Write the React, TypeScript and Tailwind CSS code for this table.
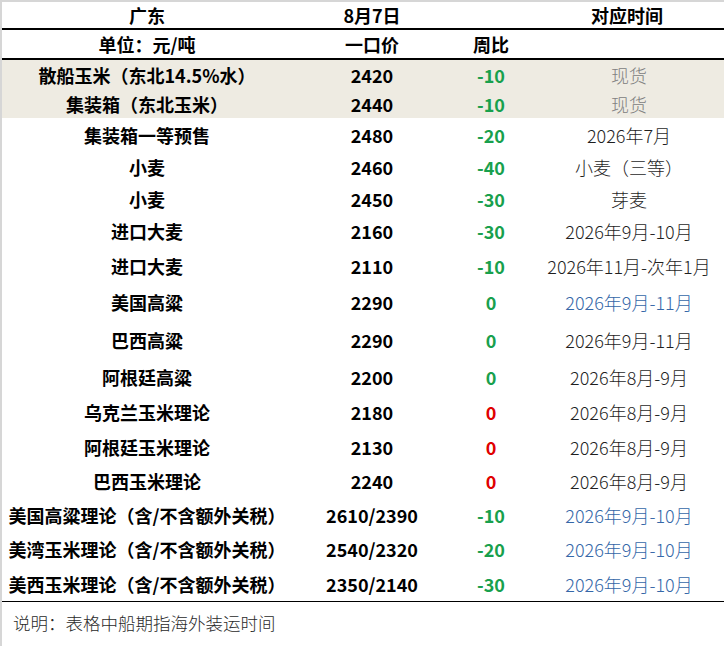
import React from "react";

type Row = {
  name: string;
  price: string;
  chg: string;
  chgColor: "g" | "r";
  time: string;
  timeBlue?: boolean;
  h: string;
  hl?: boolean;
};

const rows: Row[] = [
  { name: "散船玉米（东北14.5%水）", price: "2420", chg: "-10", chgColor: "g", time: "现货", h: "h-[29px]", hl: true },
  { name: "集装箱（东北玉米）", price: "2440", chg: "-10", chgColor: "g", time: "现货", h: "h-[29px]", hl: true },
  { name: "集装箱一等预售", price: "2480", chg: "-20", chgColor: "g", time: "2026年7月", h: "h-[33px]" },
  { name: "小麦", price: "2460", chg: "-40", chgColor: "g", time: "小麦（三等）", h: "h-[32px]" },
  { name: "小麦", price: "2450", chg: "-30", chgColor: "g", time: "芽麦", h: "h-[31px]" },
  { name: "进口大麦", price: "2160", chg: "-30", chgColor: "g", time: "2026年9月-10月", h: "h-[33px]" },
  { name: "进口大麦", price: "2110", chg: "-10", chgColor: "g", time: "2026年11月-次年1月", h: "h-[37px]" },
  { name: "美国高粱", price: "2290", chg: "0", chgColor: "g", time: "2026年9月-11月", timeBlue: true, h: "h-[36px]" },
  { name: "巴西高粱", price: "2290", chg: "0", chgColor: "g", time: "2026年9月-11月", h: "h-[40px]" },
  { name: "阿根廷高粱", price: "2200", chg: "0", chgColor: "g", time: "2026年8月-9月", h: "h-[34px]" },
  { name: "乌克兰玉米理论", price: "2180", chg: "0", chgColor: "r", time: "2026年8月-9月", h: "h-[36px]" },
  { name: "阿根廷玉米理论", price: "2130", chg: "0", chgColor: "r", time: "2026年8月-9月", h: "h-[34px]" },
  { name: "巴西玉米理论", price: "2240", chg: "0", chgColor: "r", time: "2026年8月-9月", h: "h-[34px]" },
  { name: "美国高粱理论（含/不含额外关税）", price: "2610/2390", chg: "-10", chgColor: "g", time: "2026年9月-10月", timeBlue: true, h: "h-[33px]" },
  { name: "美湾玉米理论（含/不含额外关税）", price: "2540/2320", chg: "-20", chgColor: "g", time: "2026年9月-10月", timeBlue: true, h: "h-[36px]" },
  { name: "美西玉米理论（含/不含额外关税）", price: "2350/2140", chg: "-30", chgColor: "g", time: "2026年9月-10月", timeBlue: true, h: "h-[34px]" },
];

const grid = "grid grid-cols-[290px_160px_78px_1fr] items-center";

export default function App() {
  return (
    <div
      className="w-[724px] h-[646px] bg-white border-l-2 border-t-2 border-[#d6d6d6] text-[18px] leading-none text-black overflow-hidden"
      style={{ fontFamily: '"Noto Sans CJK SC", "Noto Sans", sans-serif' }}
    >
      <div className={`${grid} h-[28px] font-bold border-b-2 border-black`}>
        <div className="text-center">广东</div>
        <div className="text-center">8月7日</div>
        <div />
        <div className="text-center">对应时间</div>
      </div>
      <div className={`${grid} h-[30px] font-bold border-b-2 border-black`}>
        <div className="text-center">单位：元/吨</div>
        <div className="text-center">一口价</div>
        <div className="text-center">周比</div>
        <div />
      </div>
      {rows.map((r, i) => (
        <div key={i} className={`${grid} ${r.h} ${r.hl ? "bg-[#eeebe2]" : ""}`}>
          <div className="text-center font-bold whitespace-nowrap">{r.name}</div>
          <div className="text-center font-bold">{r.price}</div>
          <div className={`text-center font-bold ${r.chgColor === "g" ? "text-[#18a04d]" : "text-[#e00000]"}`}>{r.chg}</div>
          <div
            className={`text-center whitespace-nowrap font-light pl-[4px] ${
              r.hl ? "text-[#808080]" : r.timeBlue ? "text-[#3567a8]" : "text-[#1f1f1f]"
            }`}
          >
            {r.time}
          </div>
        </div>
      ))}
      <div className="border-t border-black pl-[11px] pt-[12px] text-[17.5px] font-light text-[#2a2a2a]">说明：表格中船期指海外装运时间</div>
    </div>
  );
}
